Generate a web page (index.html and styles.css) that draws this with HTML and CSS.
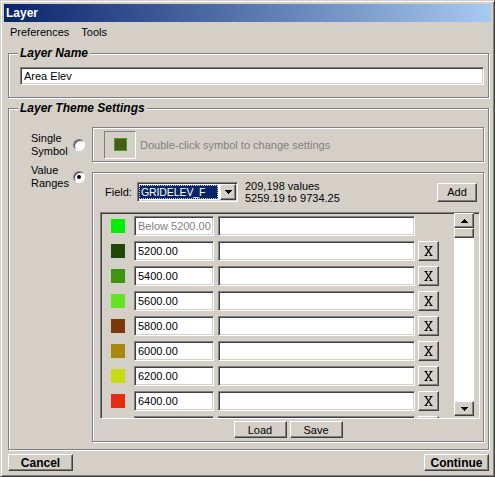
FILE: index.html
```html
<!DOCTYPE html>
<html>
<head>
<meta charset="utf-8">
<title>Layer</title>
<link rel="stylesheet" href="styles.css">
</head>
<body>
<div class="window">
  <div class="titlebar"><span class="title">Layer</span></div>
  <div class="menubar"><span class="menu-item">Preferences</span><span class="menu-item">Tools</span></div>

  <div class="group group-name">
    <span class="legend">Layer Name</span>
    <div class="textbox name-box">Area Elev</div>
  </div>

  <div class="group group-theme">
    <span class="legend">Layer Theme Settings</span>
    <div class="option-row">
      <div class="option-label"><span class="option-text">Single<br>Symbol</span><span class="radio"></span></div>
      <div class="etched symbol-box">
        <div class="symbol-btn"><span class="symbol-swatch"></span></div>
        <span class="hint">Double-click symbol to change settings</span>
      </div>
    </div>
    <div class="option-row option-row-ranges">
      <div class="option-label"><span class="option-text">Value<br>Ranges</span><span class="radio checked"></span></div>
      <div class="etched ranges-box">
        <div class="field-row">
          <span class="field-label">Field:</span>
          <div class="combo">
            <span class="combo-value">GRIDELEV_F</span>
            <span class="btn combo-btn"><svg width="7" height="4" viewBox="0 0 7 4"><path d="M0 0h7v1h-7z M1 1h5v1h-5z M2 2h3v1h-3z M3 3h1v1h-1z"/></svg></span>
          </div>
          <div class="stats"><div>209,198 values</div><div>5259.19 to 9734.25</div></div>
          <button class="btn add-btn">Add</button>
        </div>
        <div class="listbox">
          <div class="rows">
            <div class="range-row"><span class="swatch" style="background:#00f000"></span><div class="textbox val muted">Below 5200.00</div><div class="textbox desc"></div><span class="x-slot"></span></div>
            <div class="range-row"><span class="swatch" style="background:#1f4808"></span><div class="textbox val">5200.00</div><div class="textbox desc"></div><button class="btn x-btn"><svg width="9" height="10" viewBox="0 0 9 10"><path d="M1.8 1 L7.2 9 M7.2 1 L1.8 9" stroke="#000" stroke-width="1.3" fill="none"/><path d="M0.5 0.5h3 M5.5 0.5h3 M0.5 9.5h3 M5.5 9.5h3" stroke="#000" stroke-width="1" fill="none"/></svg></button></div>
            <div class="range-row"><span class="swatch" style="background:#3e9610"></span><div class="textbox val">5400.00</div><div class="textbox desc"></div><button class="btn x-btn"><svg width="9" height="10" viewBox="0 0 9 10"><path d="M1.8 1 L7.2 9 M7.2 1 L1.8 9" stroke="#000" stroke-width="1.3" fill="none"/><path d="M0.5 0.5h3 M5.5 0.5h3 M0.5 9.5h3 M5.5 9.5h3" stroke="#000" stroke-width="1" fill="none"/></svg></button></div>
            <div class="range-row"><span class="swatch" style="background:#62e41e"></span><div class="textbox val">5600.00</div><div class="textbox desc"></div><button class="btn x-btn"><svg width="9" height="10" viewBox="0 0 9 10"><path d="M1.8 1 L7.2 9 M7.2 1 L1.8 9" stroke="#000" stroke-width="1.3" fill="none"/><path d="M0.5 0.5h3 M5.5 0.5h3 M0.5 9.5h3 M5.5 9.5h3" stroke="#000" stroke-width="1" fill="none"/></svg></button></div>
            <div class="range-row"><span class="swatch" style="background:#7a380a"></span><div class="textbox val">5800.00</div><div class="textbox desc"></div><button class="btn x-btn"><svg width="9" height="10" viewBox="0 0 9 10"><path d="M1.8 1 L7.2 9 M7.2 1 L1.8 9" stroke="#000" stroke-width="1.3" fill="none"/><path d="M0.5 0.5h3 M5.5 0.5h3 M0.5 9.5h3 M5.5 9.5h3" stroke="#000" stroke-width="1" fill="none"/></svg></button></div>
            <div class="range-row"><span class="swatch" style="background:#a8880c"></span><div class="textbox val">6000.00</div><div class="textbox desc"></div><button class="btn x-btn"><svg width="9" height="10" viewBox="0 0 9 10"><path d="M1.8 1 L7.2 9 M7.2 1 L1.8 9" stroke="#000" stroke-width="1.3" fill="none"/><path d="M0.5 0.5h3 M5.5 0.5h3 M0.5 9.5h3 M5.5 9.5h3" stroke="#000" stroke-width="1" fill="none"/></svg></button></div>
            <div class="range-row"><span class="swatch" style="background:#c8dc10"></span><div class="textbox val">6200.00</div><div class="textbox desc"></div><button class="btn x-btn"><svg width="9" height="10" viewBox="0 0 9 10"><path d="M1.8 1 L7.2 9 M7.2 1 L1.8 9" stroke="#000" stroke-width="1.3" fill="none"/><path d="M0.5 0.5h3 M5.5 0.5h3 M0.5 9.5h3 M5.5 9.5h3" stroke="#000" stroke-width="1" fill="none"/></svg></button></div>
            <div class="range-row"><span class="swatch" style="background:#e42c12"></span><div class="textbox val">6400.00</div><div class="textbox desc"></div><button class="btn x-btn"><svg width="9" height="10" viewBox="0 0 9 10"><path d="M1.8 1 L7.2 9 M7.2 1 L1.8 9" stroke="#000" stroke-width="1.3" fill="none"/><path d="M0.5 0.5h3 M5.5 0.5h3 M0.5 9.5h3 M5.5 9.5h3" stroke="#000" stroke-width="1" fill="none"/></svg></button></div>
            <div class="range-row"><span class="swatch" style="background:#8a1010"></span><div class="textbox val"></div><div class="textbox desc"></div><button class="btn x-btn"></button></div>
          </div>
          <div class="scrollbar">
            <span class="btn sb-btn"><svg width="7" height="4" viewBox="0 0 7 4"><path d="M3 0h1v1h-1z M2 1h3v1h-3z M1 2h5v1h-5z M0 3h7v1h-7z"/></svg></span>
            <span class="btn sb-thumb"></span>
            <span class="sb-track"></span>
            <span class="btn sb-btn"><svg width="7" height="4" viewBox="0 0 7 4"><path d="M0 0h7v1h-7z M1 1h5v1h-5z M2 2h3v1h-3z M3 3h1v1h-1z"/></svg></span>
          </div>
        </div>
        <div class="list-actions">
          <button class="btn small-btn">Load</button>
          <button class="btn small-btn">Save</button>
        </div>
      </div>
    </div>
  </div>

  <div class="footer">
    <button class="btn footer-btn">Cancel</button>
    <button class="btn footer-btn">Continue</button>
  </div>
</div>
</body>
</html>
```

FILE: styles.css
```css
html, body {
  margin: 0;
  padding: 0;
  background: #d4d0c8;
}

body {
  font-family: "Liberation Sans", Arial, sans-serif;
  font-size: 11px;
  color: #000;
}

.window {
  width: 495px;
  height: 477px;
  box-sizing: border-box;
  border: 1px solid;
  border-color: #d4d0c8 #404040 #404040 #d4d0c8;
  box-shadow: inset 1px 1px 0 #fff, inset -1px -1px 0 #808080;
  padding: 3px;
  display: flex;
  flex-direction: column;
  background: #d4d0c8;
}

.titlebar {
  flex: none;
  height: 18px;
  background: linear-gradient(to right, #0a246a, #a6caf0);
  display: flex;
  align-items: center;
  padding-left: 2px;
}

.title {
  color: #fff;
  font-weight: bold;
  font-size: 12px;
}

.menubar {
  flex: none;
  height: 19px;
  display: flex;
  align-items: center;
}

.menu-item {
  padding: 0 6px;
}

.group {
  position: relative;
  flex: none;
  box-sizing: border-box;
  border: 1px solid #808080;
  box-shadow: inset 1px 1px 0 #fff, 1px 1px 0 #fff;
  margin-left: 4px;
  margin-right: 2px;
}

.legend {
  position: absolute;
  top: -8px;
  left: 9px;
  padding: 0 2px;
  background: #d4d0c8;
  font-weight: bold;
  font-style: italic;
  font-size: 12px;
  line-height: 14px;
}

.group-name {
  margin-top: 12px;
  padding: 13px 4px 12px 11px;
}

.textbox {
  box-sizing: border-box;
  height: 18px;
  background: #fff;
  border: 1px solid;
  border-color: #808080 #fff #fff #808080;
  box-shadow: inset 1px 1px 0 #404040, inset -1px -1px 0 #d4d0c8;
  padding: 0 1px 0 3px;
  display: flex;
  align-items: center;
  white-space: nowrap;
  overflow: hidden;
}

.group-theme {
  margin-top: 10px;
  height: 342px;
  padding: 18px 4px 7px 0;
}

.option-row {
  display: flex;
}

.option-row-ranges {
  margin-top: 2px;
}

.option-label {
  flex: none;
  width: 83px;
  box-sizing: border-box;
  padding-left: 22px;
  display: flex;
  align-items: center;
}

.option-row-ranges .option-label {
  align-self: flex-start;
}

.option-text {
  width: 42px;
  line-height: 13px;
}

.radio {
  flex: none;
  position: relative;
  width: 12px;
  height: 12px;
  box-sizing: border-box;
  border-radius: 50%;
  border: 1px solid;
  border-color: #808080 #fff #fff #808080;
  box-shadow: inset 1px 1px 0 #404040;
  background: #fff;
}

.radio.checked::after {
  content: "";
  position: absolute;
  left: 3px;
  top: 3px;
  width: 4px;
  height: 4px;
  border-radius: 50%;
  background: #000;
}

.etched {
  flex: 1;
  box-sizing: border-box;
  border: 1px solid #808080;
  box-shadow: inset 1px 1px 0 #fff, 1px 1px 0 #fff;
}

.symbol-box {
  height: 35px;
  display: flex;
  align-items: center;
  padding-left: 11px;
}

.symbol-btn {
  width: 32px;
  height: 28px;
  box-sizing: border-box;
  border: 1px solid;
  border-color: #808080 #fff #fff #808080;
  display: flex;
  align-items: center;
  justify-content: center;
}

.symbol-swatch {
  width: 13px;
  height: 13px;
  box-sizing: border-box;
  border: 1px solid #3aa02a;
  background: #4a5c14;
}

.hint {
  margin-left: 4px;
  color: #808080;
}

.ranges-box {
  margin-top: 8px;
  height: 270px;
  display: flex;
  flex-direction: column;
  padding: 7px 0 3px 0;
}

.field-row {
  height: 24px;
  display: flex;
  align-items: center;
  padding: 0 6px 0 12px;
}

.field-label {
  width: 32px;
}

.combo {
  box-sizing: border-box;
  width: 101px;
  height: 20px;
  background: #fff;
  border: 1px solid;
  border-color: #808080 #fff #fff #808080;
  box-shadow: inset 1px 1px 0 #404040, inset -1px -1px 0 #d4d0c8;
  padding: 1px;
  display: flex;
}

.combo-value {
  flex: 1;
  min-width: 0;
  margin: 1px 2px 1px 0;
  background: #0a246a;
  color: #fff;
  outline: 1px dotted #d4d0c8;
  outline-offset: -1px;
  display: flex;
  align-items: center;
  padding-left: 2px;
  white-space: nowrap;
  font-size: 10.5px;
  letter-spacing: -0.1px;
}

.btn {
  font: inherit;
  color: #000;
  box-sizing: border-box;
  background: #d4d0c8;
  border: 1px solid;
  border-color: #fff #404040 #404040 #fff;
  box-shadow: inset -1px -1px 0 #808080;
  padding: 0;
  margin: 0;
  display: flex;
  align-items: center;
  justify-content: center;
}

.combo-btn {
  width: 16px;
  flex: none;
}

.stats {
  margin-left: 7px;
  line-height: 12px;
}

.add-btn {
  margin-left: auto;
  width: 40px;
  height: 19px;
}

.listbox {
  margin: 8px 3px 0 7px;
  height: 207px;
  box-sizing: border-box;
  border: 1px solid;
  border-color: #808080 #fff #fff #808080;
  box-shadow: inset 1px 1px 0 #404040, inset -1px -1px 0 #d4d0c8;
  display: flex;
  overflow: hidden;
}

.rows {
  flex: 1;
  min-width: 0;
  overflow: hidden;
  padding: 3px 0 0 10px;
}

.range-row {
  display: flex;
  align-items: center;
  height: 20px;
  margin-bottom: 5px;
}

.swatch {
  flex: none;
  width: 14px;
  height: 14px;
  margin-right: 9px;
}

.range-row .textbox {
  height: 20px;
}

.val {
  width: 80px;
  margin-right: 4px;
}

.muted {
  color: #808080;
}

.desc {
  width: 197px;
  margin-right: 3px;
}

.x-btn,
.x-slot {
  flex: none;
  width: 21px;
  height: 20px;
}

.scrollbar {
  flex: none;
  width: 20px;
  height: 203px;
  margin-right: 5px;
  display: flex;
  flex-direction: column;
}

.sb-btn {
  height: 15px;
  flex: none;
}

.sb-thumb {
  height: 10px;
  flex: none;
}

.sb-track {
  flex: 1;
  background: #fff;
}

.list-actions {
  margin-top: 2px;
  display: flex;
  justify-content: center;
  gap: 3px;
}

.small-btn {
  width: 53px;
  height: 17px;
}

.footer {
  margin-top: 4px;
  display: flex;
  justify-content: space-between;
  padding: 0 2px 0 4px;
}

.footer-btn {
  width: 65px;
  height: 17px;
  font-weight: bold;
  font-size: 12px;
}
```
